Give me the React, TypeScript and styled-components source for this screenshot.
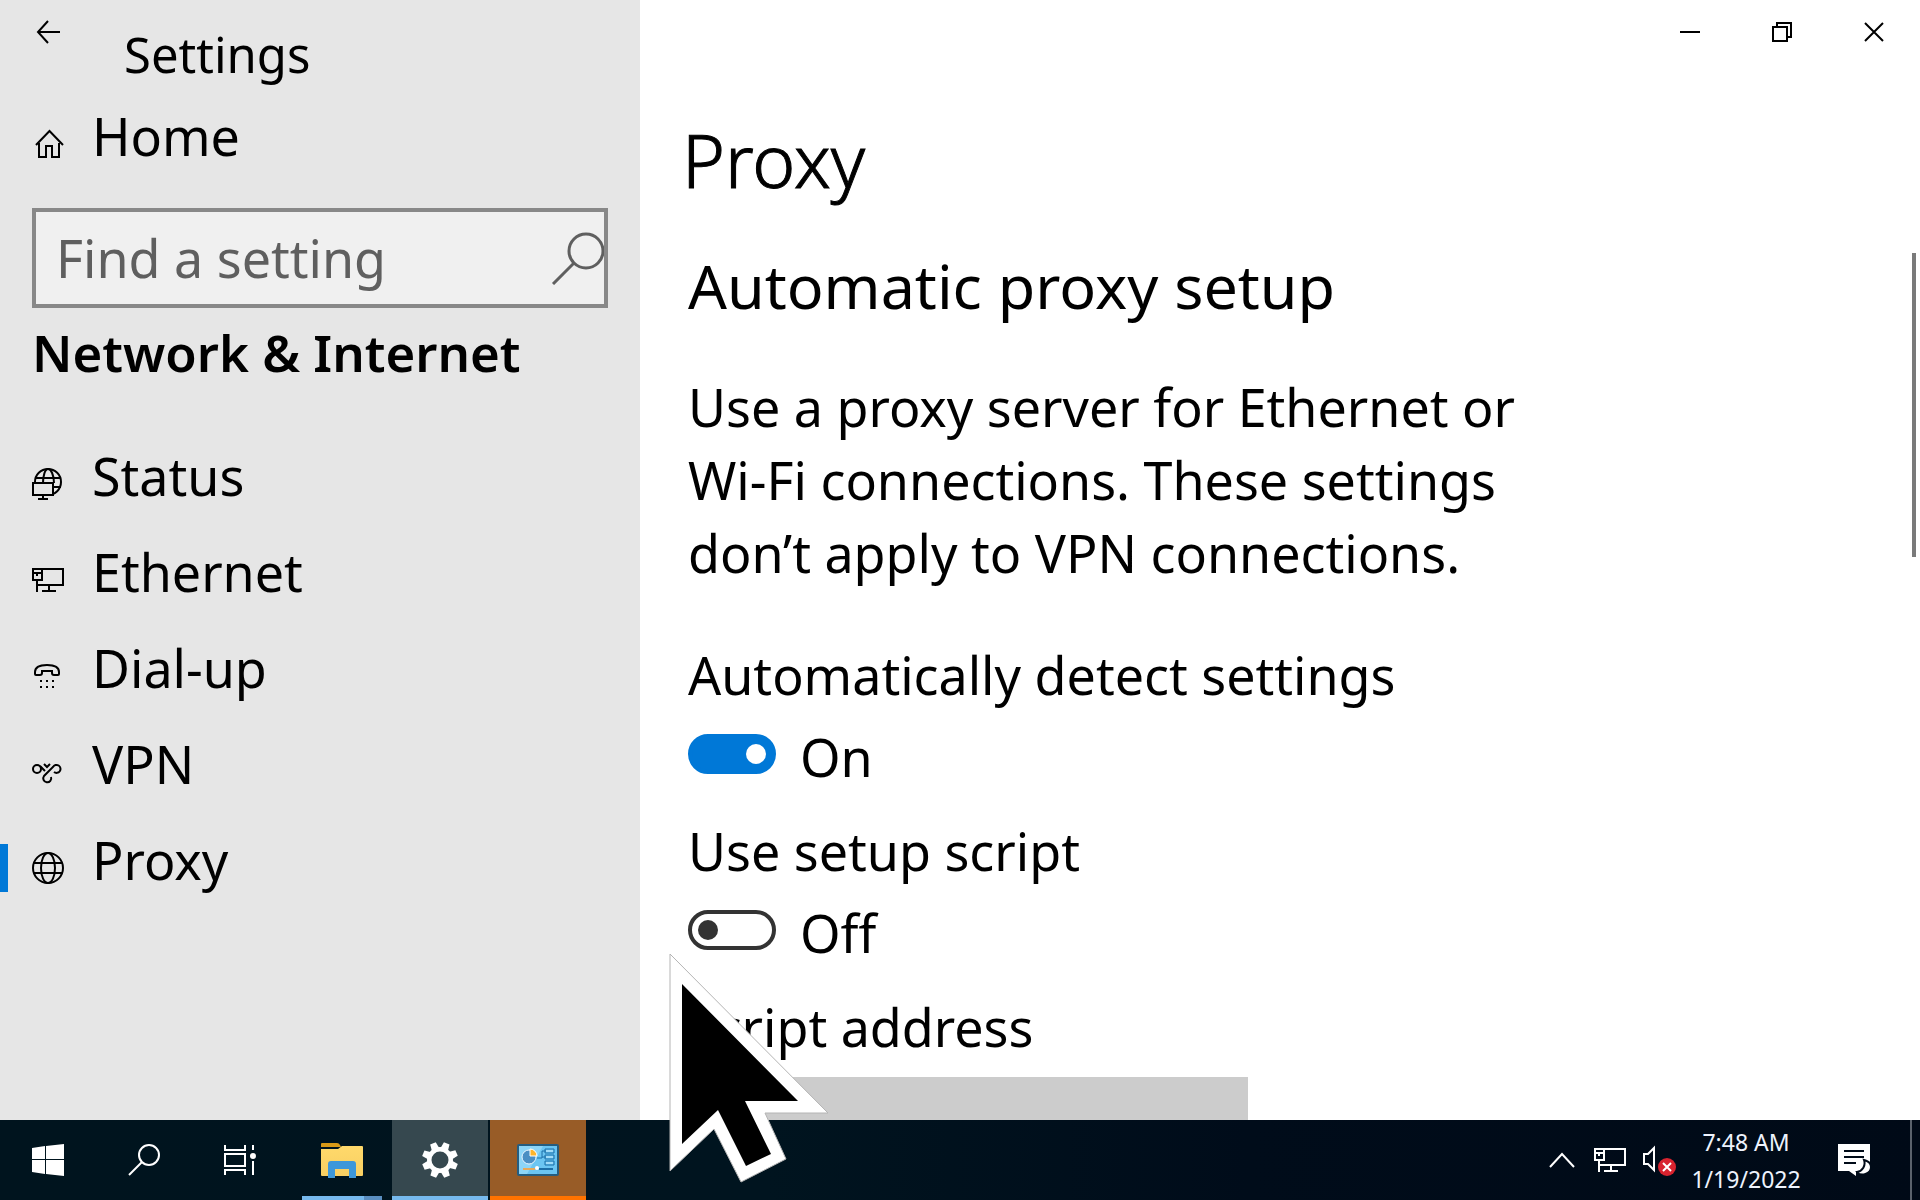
import React, { useState } from "react";
import styled, { createGlobalStyle } from "styled-components";

const GlobalStyle = createGlobalStyle`
  *, *::before, *::after { box-sizing: border-box; }
  body { margin: 0; background: #fff; overflow: hidden; }
  button, input { font: inherit; color: inherit; }
  h1, h2, p { margin: 0; }
`;

const Desktop = styled.div`
  position: relative;
  display: flex;
  flex-direction: column;
  height: 100vh;
  overflow: hidden;
  color: #000;
  font-family: "Noto Sans", "Open Sans", sans-serif;
  font-size: 52px;
  line-height: 64px;
`;

const Window = styled.div`
  flex: 1;
  min-height: 0;
  display: grid;
  grid-template-columns: minmax(0, 1fr) minmax(0, 2fr);
`;

/* ---------- sidebar ---------- */

const Sidebar = styled.aside`
  display: flex;
  flex-direction: column;
  min-height: 0;
  overflow: hidden;
  background: #e6e6e6;
`;

const SidebarHeader = styled.header`
  display: flex;
  align-items: flex-start;
  gap: 28px;
`;

const PlainButton = styled.button`
  display: flex;
  align-items: center;
  justify-content: center;
  padding: 0;
  border: 0;
  background: transparent;
`;

const BackButton = styled(PlainButton)`
  width: 96px;
  height: 64px;
`;

const AppTitle = styled.span`
  padding-top: 22px;
  font-size: 49px;
`;

const NavLink = styled.a`
  display: flex;
  align-items: center;
  gap: 28px;
  padding-left: 32px;
  color: inherit;
  text-decoration: none;
`;

const HomeLink = styled(NavLink)`
  margin-top: 18px;
`;

const NavIcon = styled.svg`
  flex: none;
  width: 32px;
  height: 32px;
  fill: none;
  stroke: #000;
  stroke-width: 2;
`;

const NavLabel = styled.span`
  padding-bottom: 16px;
`;

const SearchBox = styled.form`
  display: flex;
  height: 100px;
  margin: 24px 32px 0;
  border: 4px solid #888;
  background: #f0f0f0;
  color: #5f5f5f;
`;

const SearchInput = styled.input`
  flex: 1;
  min-width: 0;
  padding: 0 20px;
  border: 0;
  outline: 0;
  background: transparent;
  &::placeholder { color: #5f5f5f; opacity: 1; }
`;

const SearchButton = styled(PlainButton)`
  width: 56px;
  justify-content: flex-end;
`;

const Section = styled.h2`
  margin-top: 12px;
  padding-left: 32px;
  font-size: 51px;
  font-weight: 600;
  white-space: nowrap;
`;

const NavList = styled.ul`
  margin: 52px 0 0;
  padding: 0;
  list-style: none;
`;

const NavItem = styled.li<{ $current?: boolean }>`
  display: flex;
  align-items: center;
  height: 96px;
  &::before {
    content: "";
    width: 8px;
    height: 48px;
    margin-right: -8px;
    background: ${(p) => (p.$current ? "#0078d7" : "transparent")};
  }
`;

/* ---------- main pane ---------- */

const Main = styled.main`
  display: flex;
  flex-direction: column;
  min-height: 0;
  overflow: hidden;
  background: #fff;
`;

const WindowControls = styled.div`
  flex: none;
  display: flex;
  justify-content: flex-end;
`;

const ControlButton = styled(PlainButton)`
  width: 92px;
  height: 64px;
`;

const ScrollArea = styled.div`
  flex: 1;
  min-height: 0;
  display: flex;
  justify-content: space-between;
`;

const Content = styled.div`
  flex: 1;
  max-width: 900px;
  padding: 48px 0 0 48px;
`;

const ScrollRail = styled.div`
  width: 8px;
  padding-top: 189px;
`;

const ScrollThumb = styled.div`
  width: 4px;
  height: 304px;
  background: #7a7a7a;
`;

const PageTitle = styled.h1`
  margin-left: -6px;
  font-size: 73px;
  font-weight: 300;
  line-height: 96px;
  -webkit-text-stroke: 1px #000;
`;

const SectionTitle = styled.h2`
  margin-top: 42px;
  font-size: 61px;
  font-weight: 400;
  line-height: 72px;
  white-space: nowrap;
`;

const Description = styled.p`
  margin-top: 48px;
  line-height: 73px;
`;

const Field = styled.div`
  display: flex;
  flex-direction: column;
  align-items: flex-start;
  gap: 18px;
  margin-top: 30px;
  &:first-of-type { margin-top: 54px; }
`;

const SwitchRow = styled.div`
  display: flex;
  align-items: flex-start;
  gap: 24px;
`;

const Switch = styled.input`
  appearance: none;
  display: flex;
  align-items: center;
  width: 88px;
  height: 40px;
  margin: 9px 0 0;
  padding: 0 6px;
  border: 4px solid #333;
  border-radius: 20px;
  &::before {
    content: "";
    width: 20px;
    height: 20px;
    border-radius: 50%;
    background: #333;
  }
  &:checked {
    justify-content: flex-end;
    border-color: #0078d7;
    background: #0078d7;
  }
  &:checked::before { background: #fff; }
`;

const AddressInput = styled.input`
  width: 560px;
  height: 72px;
  padding: 0 16px;
  border: 0;
  background: #ccc;
`;

/* ---------- taskbar ---------- */

const Taskbar = styled.footer`
  flex: none;
  display: flex;
  height: 80px;
  background: linear-gradient(90deg, #00141e 0%, #00141f 40%, #000c1a 65%, #000a17 100%);
  color: #eef3fd;
`;

const TaskButton = styled(PlainButton)`
  width: 96px;
`;

const PinnedApps = styled.div`
  display: flex;
  gap: 2px;
  margin-left: 6px;
`;

const AppButton = styled(PlainButton)<{ $fill?: string; $line: string; $inset?: number }>`
  flex-direction: column;
  width: 96px;
  background: ${(p) => p.$fill ?? "transparent"};
  &::before {
    content: "";
    height: 4px;
  }
  svg { margin: auto; }
  &::after {
    content: "";
    align-self: stretch;
    height: 4px;
    margin: 0 ${(p) => p.$inset ?? 0}px;
    background: ${(p) => p.$line};
  }
`;

const Tray = styled.div`
  display: flex;
  align-items: center;
  margin-left: auto;
`;

const TrayButton = styled(PlainButton)<{ $width: number }>`
  width: ${(p) => p.$width}px;
  height: 80px;
`;

const Clock = styled.time`
  display: flex;
  flex-direction: column;
  align-items: center;
  width: 124px;
  padding-top: 2px;
  font-size: 23px;
  line-height: 37px;
  white-space: nowrap;
`;

const ShowDesktop = styled(PlainButton)`
  width: 10px;
  height: 80px;
  margin-left: 10px;
  border-left: 2px solid #5a626c;
`;

const Pointer = styled.svg`
  position: absolute;
  left: 668px;
  top: 950px;
  width: 164px;
  height: 236px;
  pointer-events: none;
`;

/* ---------- drawings ---------- */

const HomeIcon = () => (
  <NavIcon viewBox="0 0 32 32">
    <path d="M4 17 17.500 3 31 17M7 15v14h7V18h6v11h7V15" />
  </NavIcon>
);

const StatusIcon = () => (
  <NavIcon viewBox="0 0 32 32">
    <circle cx="16" cy="14" r="13" />
    <path d="M11 15c0-7 2-14 5-14s6 6 6 14M4 10h24M20 19h9" />
    <path d="M1 15h20v12H1z" fill="#e6e6e6" />
    <path d="M11 27v4M6 31h10" />
  </NavIcon>
);

const EthernetPaths = () => (
  <>
    <path d="M10 5h21v16H5M17 21v6M10 27h14" />
    <path d="M1 5h9v11H1zM1 9h9M5 9v3M5 16v12" />
  </>
);

const EthernetIcon = () => (
  <NavIcon viewBox="0 0 32 32"><EthernetPaths /></NavIcon>
);

const DialUpIcon = () => (
  <NavIcon viewBox="0 0 32 32">
    <path d="M3 12C3 7 8 5 15 5s12 2 12 7v2q0 1-1 1h-4q-2 0-2-2v-2H10v2q0 2-2 2H4q-1 0-1-1z" />
    <path d="M8 21h2M14 21h2M20 21h2M8 27h2M14 27h2M20 27h2" />
  </NavIcon>
);

const VpnIcon = () => (
  <NavIcon viewBox="0 0 32 32">
    <circle cx="5" cy="13" r="4" />
    <path d="M8 10l5 5M12 8l3 3 3-3" />
    <path d="M22 16a4 4 0 1 0-1-5L12 20a4 4 0 1 0 7 1" />
  </NavIcon>
);

const GlobeIcon = () => (
  <NavIcon viewBox="0 0 32 32">
    <circle cx="16" cy="16" r="15" />
    <ellipse cx="16" cy="16" rx="7" ry="15" />
    <path d="M2 11h28M2 21h28" />
  </NavIcon>
);

const navItems = [
  { label: "Status", Icon: StatusIcon },
  { label: "Ethernet", Icon: EthernetIcon },
  { label: "Dial-up", Icon: DialUpIcon },
  { label: "VPN", Icon: VpnIcon },
  { label: "Proxy", Icon: GlobeIcon, current: true },
];

const FolderIcon = () => (
  <svg width="44" height="36" viewBox="0 0 44 36">
    <defs>
      <linearGradient id="folder" x2="0" y2="1">
        <stop offset="0" stopColor="#ffd96b" />
        <stop offset="1" stopColor="#f8cf62" />
      </linearGradient>
    </defs>
    <path d="M1 2q0-1 1-1h15q2 0 3 2l1 2H1z" fill="#d99a17" />
    <path d="M1 7h17l4-3h20q1 0 1 1v28q0 1-1 1H2q-1 0-1-1z" fill="url(#folder)" />
    <path d="M8 36V22q0-3 3-3h22q3 0 3 3v14h-7v-9H15v9z" fill="#3d97da" />
  </svg>
);

const GearIcon = () => (
  <svg width="36" height="36" viewBox="-18 -18 36 36" fill="#fff">
    <path fillRule="evenodd" d="M0-13A13 13 0 1 1 0 13 13 13 0 1 1 0-13M0-8.500A8.500 8.500 0 1 0 0 8.500 8.500 8.500 0 1 0 0-8.500" />
    {[22, 67, 112, 157, 202, 247, 292, 337].map((angle) => (
      <path key={angle} d="M-4-11-3-18H3L4-11z" transform={`rotate(${angle})`} />
    ))}
  </svg>
);

const ControlPanelIcon = () => (
  <svg width="42" height="32" viewBox="0 0 42 32">
    <rect width="42" height="32" rx="2" fill="#255d80" />
    <rect x="2" y="2" width="38" height="28" fill="#6bc5f2" />
    <path d="M2 2h24L10 30H2z" fill="#8dd5f7" />
    <circle cx="12" cy="13" r="7" fill="#4b8fc4" stroke="#e9f6ff" strokeWidth="1" />
    <path d="M13 12V5a7 7 0 0 1 7 7z" fill="#ffb52b" stroke="#fff" />
    <path d="M20 14h5V7h4M25 13h4M28 5h9v4h-9zM28 11h9v4h-9zM28 17h9v4h-9z" fill="none" stroke="#1d6fa8" />
    <path d="M29 7h7M29 13h7M29 19h7" stroke="#d8f2ff" />
    <path d="M6 25h12" stroke="#e7a95a" strokeWidth="2" />
    <path d="M22 25h14" stroke="#1d6fa8" strokeWidth="2" />
    <circle cx="20" cy="24" r="2" fill="#fff" />
  </svg>
);

function ProxySwitch({ id, label, initial }: { id: string; label: string; initial: boolean }) {
  const [on, setOn] = useState(initial);
  return (
    <Field>
      <label htmlFor={id}>{label}</label>
      <SwitchRow>
        <Switch id={id} type="checkbox" role="switch" checked={on} onChange={(e) => setOn(e.target.checked)} />
        <span>{on ? "On" : "Off"}</span>
      </SwitchRow>
    </Field>
  );
}

export default function App() {
  return (
    <Desktop>
      <GlobalStyle />
      <Window>
        <Sidebar>
          <SidebarHeader>
            <BackButton aria-label="Back">
              <svg width="24" height="24" viewBox="0 0 24 24" fill="none" stroke="#000" strokeWidth="2">
                <path d="M24 12H2M12 1 2 12l10 11" />
              </svg>
            </BackButton>
            <AppTitle>Settings</AppTitle>
          </SidebarHeader>
          <HomeLink href="#home">
            <HomeIcon />
            <NavLabel>Home</NavLabel>
          </HomeLink>
          <SearchBox role="search" onSubmit={(e) => e.preventDefault()}>
            <SearchInput aria-label="Find a setting" placeholder="Find a setting" />
            <SearchButton aria-label="Search">
              <svg width="54" height="54" viewBox="0 0 54 54" fill="none" stroke="#5f5f5f" strokeWidth="3">
                <circle cx="36" cy="20" r="17" />
                <path d="M24 32 3 53" />
              </svg>
            </SearchButton>
          </SearchBox>
          <Section>Network &amp; Internet</Section>
          <nav aria-label="Network & Internet">
            <NavList>
              {navItems.map(({ label, Icon, current }) => (
                <NavItem key={label} $current={current}>
                  <NavLink href={`#${label.toLowerCase()}`} aria-current={current ? "page" : undefined}>
                    <Icon />
                    <NavLabel>{label}</NavLabel>
                  </NavLink>
                </NavItem>
              ))}
            </NavList>
          </nav>
        </Sidebar>

        <Main>
          <WindowControls>
            <ControlButton aria-label="Minimize">
              <svg width="20" height="20" stroke="#000" strokeWidth="2"><path d="M0 10h20" /></svg>
            </ControlButton>
            <ControlButton aria-label="Restore">
              <svg width="20" height="20" fill="none" stroke="#000" strokeWidth="2">
                <path d="M1 5h14v14H1zM5 5V1h14v14h-4" />
              </svg>
            </ControlButton>
            <ControlButton aria-label="Close">
              <svg width="20" height="20" stroke="#000" strokeWidth="2"><path d="m1 1 18 18M19 1 1 19" /></svg>
            </ControlButton>
          </WindowControls>
          <ScrollArea>
            <Content>
              <PageTitle>Proxy</PageTitle>
              <SectionTitle>Automatic proxy setup</SectionTitle>
              <Description>
                Use a proxy server for Ethernet or Wi-Fi connections. These settings don’t apply to VPN connections.
              </Description>
              <ProxySwitch id="detect" label="Automatically detect settings" initial={true} />
              <ProxySwitch id="script" label="Use setup script" initial={false} />
              <Field>
                <label htmlFor="address">Script address</label>
                <AddressInput id="address" disabled />
              </Field>
            </Content>
            <ScrollRail>
              <ScrollThumb />
            </ScrollRail>
          </ScrollArea>
        </Main>
      </Window>

      <Taskbar>
        <TaskButton aria-label="Start">
          <svg width="32" height="32" viewBox="0 0 32 32" fill="#fff">
            <path d="M0 4 13 2v13H0zM14 2 32 0v15H14zM0 16h13v14L0 28zM14 16h18v16l-18-2z" />
          </svg>
        </TaskButton>
        <TaskButton aria-label="Search">
          <svg width="32" height="32" viewBox="0 0 32 32" fill="none" stroke="#fff" strokeWidth="2">
            <circle cx="21" cy="11" r="10" />
            <path d="M14 18 1 31" />
          </svg>
        </TaskButton>
        <TaskButton aria-label="Task view">
          <svg width="32" height="32" viewBox="0 0 32 32" fill="none" stroke="#fff" strokeWidth="2">
            <path d="M1 1v5h20V1M1 10h20v12H1zM1 31v-5h20v5M29 1v5M29 17v14" />
            <circle cx="29" cy="12" r="3" fill="#fff" stroke="none" />
          </svg>
        </TaskButton>
        <PinnedApps>
          <AppButton aria-label="File Explorer" $inset={8} $line="linear-gradient(90deg, #76b9ed 62px, #5a8ec0 62px)">
            <FolderIcon />
          </AppButton>
          <AppButton aria-label="Settings" $fill="#36484f" $line="#76b9ed">
            <GearIcon />
          </AppButton>
          <AppButton aria-label="Control Panel" $fill="#985c27" $line="#ff7300">
            <ControlPanelIcon />
          </AppButton>
        </PinnedApps>
        <Tray>
          <TrayButton $width={44} aria-label="Show hidden icons">
            <svg width="26" height="16" fill="none" stroke="#fff" strokeWidth="2"><path d="M1 15 13 2l12 13" /></svg>
          </TrayButton>
          <TrayButton $width={52} aria-label="Network">
            <svg width="32" height="32" viewBox="0 0 32 32" fill="none" stroke="#fff" strokeWidth="2">
              <EthernetPaths />
            </svg>
          </TrayButton>
          <TrayButton $width={48} aria-label="Volume muted">
            <svg width="34" height="32" viewBox="0 0 34 32" fill="none" stroke="#fff" strokeWidth="2">
              <path d="M1 10h4l6-6v22l-6-6H1z" />
              <circle cx="24" cy="23" r="9" fill="#d8232f" stroke="none" />
              <path d="m20 19 8 8M28 19l-8 8" />
            </svg>
          </TrayButton>
          <Clock dateTime="2022-01-19T07:48">
            <span>7:48 AM</span>
            <span>1/19/2022</span>
          </Clock>
          <TrayButton $width={92} aria-label="Notifications">
            <svg width="34" height="34" viewBox="0 0 34 34">
              <path d="M1 1h32v27H19v5l-7-5H1z" fill="#fff" />
              <path d="M7 8h20M7 14h20M7 20h12" stroke="#000b18" strokeWidth="2" />
              <path d="M27 17a9 9 0 0 1-7 12c4 5 14 2 14-5 0-4-3-6-7-7z" fill="#fff" stroke="#000b18" strokeWidth="2" />
            </svg>
          </TrayButton>
          <ShowDesktop aria-label="Show desktop" />
        </Tray>
      </Taskbar>

      <Pointer viewBox="668 950 164 236" aria-hidden="true">
        <path
          d="M670 954 828 1113H765L786 1159 741 1182 714 1129 670 1171z"
          fill="#fff"
          stroke="#b4b4b4"
          strokeWidth="1"
        />
        <path d="M682 984 798 1101H745L771 1154 746 1166 718 1110 682 1144z" fill="#000" />
      </Pointer>
    </Desktop>
  );
}
